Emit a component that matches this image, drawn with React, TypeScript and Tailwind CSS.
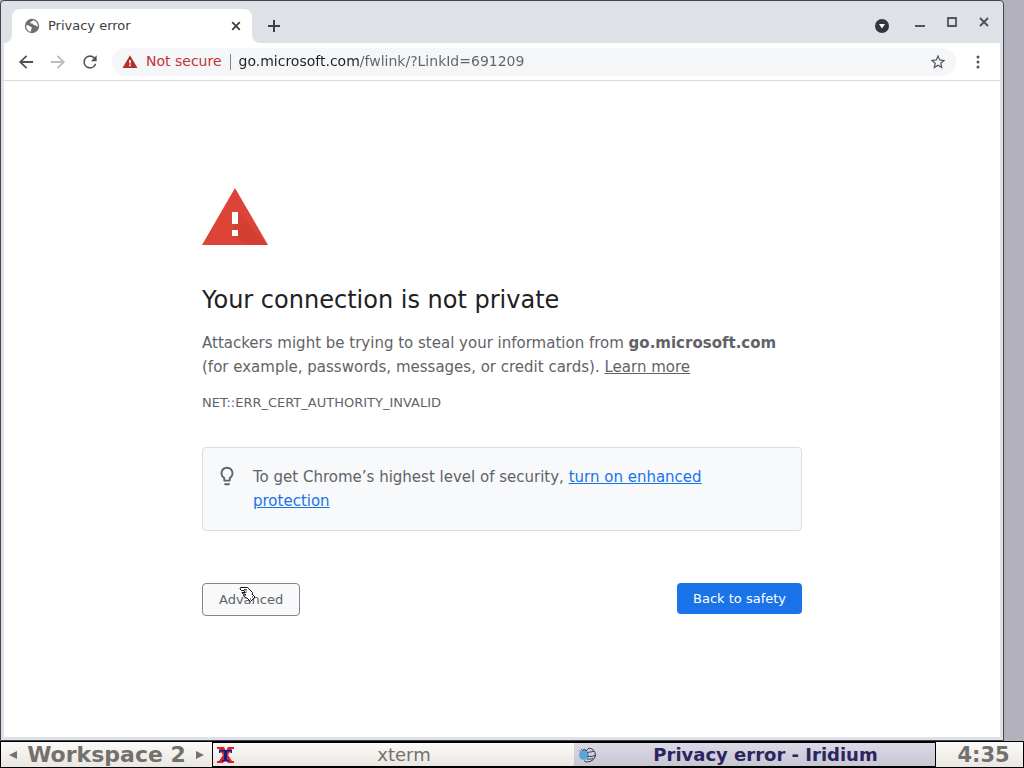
import type { ReactNode } from "react";

function GlobeIcon() {
  return (
    <svg viewBox="0 0 16 16" className="h-4 w-4 shrink-0" aria-hidden="true">
      <circle cx="8" cy="8" r="7.2" fill="#6b6f74" />
      <path
        d="M2.200 7.200c1.600-.2 3 .3 3.800 1.200.5.6 1.600.2 1.900 1 .3.900-.8 1.200-.7 2.100.1.700-.2 1.500-.6 2.200C4 13.200 1.900 10.500 2.200 7.200z"
        fill="#fff"
      />
      <path
        d="M8.800 2.300c-.2.900-.9 1.200-1.700 1.300-.6.200-.3 1-.9 1.300.2.900 1.300.7 2 .7.9 0 .8 1 1.500 1.300.9.400 2 .1 2.600 1 .3.500 1 .8 1.500.500C14 5.300 11.800 2.600 8.800 2.300z"
        fill="#fff"
      />
    </svg>
  );
}

function LeftArrow() {
  return (
    <svg viewBox="0 0 24 24" className="h-5 w-5" fill="currentColor" aria-hidden="true">
      <path d="M20.500 10.800H7.830l5.590-5.390L12 4l-8.500 8 8.500 8 1.410-1.410L7.830 13.200H20.500v-2.400z" />
    </svg>
  );
}

function ReloadIcon() {
  return (
    <svg viewBox="0 0 24 24" className="h-5 w-5" fill="currentColor" aria-hidden="true">
      <path d="M17.650 6.350A7.958 7.958 0 0 0 12 4a8 8 0 1 0 7.730 10h-2.080A6 6 0 1 1 12 6c1.660 0 3.140.69 4.220 1.780L13 11h7V4l-2.350 2.350z" />
    </svg>
  );
}

function StarIcon() {
  return (
    <svg viewBox="0 0 24 24" className="h-[18px] w-[18px]" fill="currentColor" aria-hidden="true">
      <path d="M22 9.240l-7.190-.62L12 2 9.190 8.630 2 9.240l5.460 4.730L5.820 21 12 17.270 18.180 21l-1.630-7.030L22 9.240zM12 15.400l-3.760 2.270 1-4.280-3.320-2.880 4.380-.38L12 6.100l1.710 4.040 4.380.38-3.320 2.880 1 4.280L12 15.400z" />
    </svg>
  );
}

function BulbIcon() {
  return (
    <svg viewBox="0 0 24 24" className="mx-px h-[22px] w-[22px] shrink-0" fill="#5f6368" aria-hidden="true">
      <path d="M9 21c0 .5.400 1 1 1h4c.6 0 1-.5 1-1v-1H9v1zm3-19C8.100 2 5 5.100 5 9c0 2.400 1.200 4.500 3 5.700V17c0 .5.400 1 1 1h6c.6 0 1-.5 1-1v-2.300c1.800-1.300 3-3.400 3-5.700 0-3.900-3.100-7-7-7zm2.900 11.100l-.9.600V16h-4v-2.300l-.9-.6C7.800 12.200 7 10.600 7 9c0-2.800 2.200-5 5-5s5 2.200 5 5c0 1.600-.8 3.200-2.100 4.100z" />
    </svg>
  );
}

function HandCursor() {
  return (
    <svg
      viewBox="0 0 17 17"
      className="pointer-events-none absolute top-[2px] left-[36px] h-[17px] w-[17px]"
      fill="#fff"
      stroke="#111"
      aria-hidden="true"
    >
      <path d="M1.500 1.500h7l5 5-.5 3-3.500 3.500-4-2-1-2H7L5.500 8H4l-1-1.500h3L5 4.500H2.500L1 3z" />
      <path d="M5 3.500l3 .5M5.500 6.500l2-.5M13 8l3 3-4.500 4.500-3-3" />
      <path d="M11 13h1M13 11h1" />
    </svg>
  );
}

function XtermIcon() {
  return (
    <svg viewBox="0 0 17 18" className="h-[18px] w-[17px] shrink-0" aria-hidden="true">
      <path d="M0 1h7l2 4 2-4h6v2h-2l-4 6 4 6h2v2h-6l-2.500-4-2.500 4H0v-2h2l4-6-4-6H0z" fill="#d8222b" />
      <path d="M2 4h13v3h-1.500V5.500H10V14h2v1.500H5V14h2V5.500H3.500V7H2z" fill="#171c8c" />
    </svg>
  );
}

function IridiumIcon() {
  return (
    <svg viewBox="0 0 18 16" className="h-4 w-[18px] shrink-0" aria-hidden="true">
      <circle cx="9.500" cy="8" r="6.500" fill="#cfd3e4" />
      <ellipse cx="6" cy="8" rx="5" ry="5" fill="#5ba6d6" />
      <g fill="none" stroke="#343d55" strokeWidth="1">
        <path d="M1 3.500l1 1M3 2l1.500 1.500L6.500 2l1.500 2 3-3 4 1.500 2 3 .5 3.500-2 3.500L12 14.500 8 15l-2-1.500" />
        <path d="M9 6c2-1.500 4-.5 7-2M9 9c3 1 5 .5 8-.5M9 12c2 .5 4 0 6-.5" />
      </g>
    </svg>
  );
}

type IconButtonProps = {
  label: string;
  className?: string;
  children: ReactNode;
};

function IconButton({ label, className = "", children }: IconButtonProps) {
  return (
    <button
      type="button"
      aria-label={label}
      className={`flex shrink-0 items-center justify-center ${className}`}
    >
      {children}
    </button>
  );
}

function TabStrip() {
  return (
    <header className="flex h-[41px] items-end bg-[#dee1e6] pr-2">
      <svg viewBox="0 0 8 8" className="h-2 w-2 shrink-0" fill="#fff" aria-hidden="true">
        <path d="M0 8a8 8 0 0 0 8-8v8z" />
      </svg>
      <div className="flex h-[34px] w-60 items-center rounded-t-lg bg-white pr-2 pl-3">
        <GlobeIcon />
        <span className="ml-2 flex-1 text-[13px] text-[#3c4043]">Privacy error</span>
        <IconButton label="Close tab" className="h-4 w-4">
          <svg viewBox="0 0 16 16" className="h-4 w-4" stroke="#3c4043" strokeWidth="1.800" aria-hidden="true">
            <path d="M4.200 4.200l7.600 7.600M11.800 4.200l-7.600 7.600" />
          </svg>
        </IconButton>
      </div>
      <svg viewBox="0 0 8 8" className="h-2 w-2 shrink-0" fill="#fff" aria-hidden="true">
        <path d="M8 8a8 8 0 0 1-8-8v8z" />
      </svg>
      <div className="flex h-[34px] flex-1 items-center">
        <IconButton label="New tab" className="h-7 w-7">
          <svg viewBox="0 0 14 14" className="h-[14px] w-[14px]" stroke="#3c4043" strokeWidth="2" aria-hidden="true">
            <path d="M7 1v12M1 7h12" />
          </svg>
        </IconButton>
      </div>
      <div className="flex h-[34px] items-center">
        <IconButton label="Search tabs" className="h-4 w-4">
          <svg viewBox="0 0 16 16" className="h-4 w-4" aria-hidden="true">
            <circle cx="8" cy="8" r="7" fill="#33373b" />
            <path d="M5 6h6l-3 4.500z" fill="#fff" />
          </svg>
        </IconButton>
      </div>
      <div className="mb-1 ml-[22px] flex h-[34px] items-center gap-4">
        <IconButton label="Minimize" className="h-4 w-4">
          <svg viewBox="0 0 16 16" className="h-4 w-4" fill="#50545a" aria-hidden="true">
            <path d="M3 11h10v2H3z" />
          </svg>
        </IconButton>
        <IconButton label="Maximize" className="h-4 w-4">
          <svg viewBox="0 0 16 16" className="h-4 w-4" fill="none" stroke="#50545a" strokeWidth="1.800" aria-hidden="true">
            <path d="M4 4h8v8H4z" />
          </svg>
        </IconButton>
        <IconButton label="Close" className="h-4 w-4">
          <svg viewBox="0 0 16 16" className="h-4 w-4" stroke="#50545a" strokeWidth="2" aria-hidden="true">
            <path d="M4 4l8 8M12 4l-8 8" />
          </svg>
        </IconButton>
      </div>
    </header>
  );
}

function Toolbar() {
  return (
    <nav className="flex h-[38px] items-center border-b border-[#d9dbde] bg-white pr-3 pl-3 text-[#50545a]">
      <IconButton label="Back" className="mr-3 h-5 w-5">
        <LeftArrow />
      </IconButton>
      <IconButton label="Forward" className="mr-3 h-5 w-5 -scale-x-100 text-[#babcbe]">
        <LeftArrow />
      </IconButton>
      <IconButton label="Reload" className="mr-3 h-5 w-5">
        <ReloadIcon />
      </IconButton>
      <div className="flex h-7 min-w-0 flex-1 items-center rounded-full bg-[#f5f6f7] pr-[9px] pl-[10px]">
        <svg viewBox="0 0 16 16" className="h-4 w-4 shrink-0" aria-hidden="true">
          <path d="M8 1.200L15.500 14H.5z" fill="#b3312c" />
          <path d="M7.200 6h1.600v3.500H7.200zM7.200 10.600h1.600v1.600H7.200z" fill="#fff" />
        </svg>
        <button type="button" className="ml-2 text-[14px] whitespace-nowrap text-[#c0333a]">
          Not secure
        </button>
        <span className="mx-2 h-4 w-px shrink-0 bg-[#80868b]" />
        <input
          type="text"
          aria-label="Address"
          defaultValue="go.microsoft.com/fwlink/?LinkId=691209"
          spellCheck={false}
          className="min-w-0 flex-1 bg-[linear-gradient(90deg,#202124_121px,#5f6368_121px)] bg-clip-text text-[14px] text-transparent caret-black outline-none"
        />
        <IconButton label="Bookmark this tab" className="h-[18px] w-[18px]">
          <StarIcon />
        </IconButton>
      </div>
      <IconButton label="Menu" className="ml-3 h-5 w-5">
        <svg viewBox="0 0 20 20" className="h-5 w-5" fill="currentColor" aria-hidden="true">
          <circle cx="10" cy="5" r="1.500" />
          <circle cx="10" cy="10" r="1.500" />
          <circle cx="10" cy="15" r="1.500" />
        </svg>
      </IconButton>
    </nav>
  );
}

function PrivacyError() {
  return (
    <main className="flex-1 bg-white px-6 pt-[100px] text-[15px] leading-6 text-[#5f6368]">
      <div className="mx-auto max-w-[600px]">
        <svg viewBox="0 0 72 72" className="h-[72px] w-[72px]" aria-hidden="true">
          <path d="M33 7l33 57H0z" fill="#db4437" />
          <path d="M36 31l30 33H46L30 55z" fill="#c93a2e" opacity=".4" />
          <path d="M30 31h6v12h-6zM30 49h6v6h-6z" fill="#fff" />
        </svg>
        <h1 className="mt-[33px] text-[24px] leading-7 text-[#202124]">
          Your connection is not private
        </h1>
        <p className="mt-[17px]">
          Attackers might be trying to steal your information from{" "}
          <strong>go.microsoft.com</strong> (for example, passwords, messages, or credit cards).{" "}
          <a href="#learn-more" className="underline">
            Learn more
          </a>
        </p>
        <p className="mt-3 text-[13px] leading-6">NET::ERR_CERT_AUTHORITY_INVALID</p>
        <div className="mt-8 flex rounded border border-[#dadce0] bg-[#f8f9fa] py-[17px] pr-6 pl-3">
          <BulbIcon />
          <p className="ml-[14px] flex-1">
            To get Chrome’s highest level of security,{" "}
            <a href="#enhanced-protection" className="text-[#1a73e8] underline">
              turn on enhanced protection
            </a>
          </p>
        </div>
        <div className="mt-[52px] flex items-start justify-between text-[13px] leading-[15px]">
          <button
            type="button"
            className="relative rounded border border-[#80868b] bg-[#f8f9fa] px-4 py-2"
          >
            Advanced
            <HandCursor />
          </button>
          <button type="button" className="rounded bg-[#1a73e8] px-4 py-2 text-white">
            Back to safety
          </button>
        </div>
      </div>
    </main>
  );
}

function Taskbar() {
  return (
    <footer className="flex h-[27px] gap-px border border-black bg-black text-[18px] leading-6 text-[#72716d]">
      <div className="flex w-[211px] shrink-0 items-center justify-between bg-linear-to-b from-[#fbfaf7] to-[#eae7e1] px-2">
        <button type="button" aria-label="Previous workspace">
          <svg viewBox="0 0 8 8" className="h-2 w-2" fill="currentColor" aria-hidden="true">
            <path d="M8 0v8L0 4z" />
          </svg>
        </button>
        <span className="pt-px text-[22px] font-bold">Workspace 2</span>
        <button type="button" aria-label="Next workspace">
          <svg viewBox="0 0 8 8" className="h-2 w-2" fill="currentColor" aria-hidden="true">
            <path d="M0 0l8 4-8 4z" />
          </svg>
        </button>
      </div>
      <div className="flex min-w-0 flex-1 py-px">
        <button
          type="button"
          className="flex min-w-0 flex-1 items-center bg-linear-to-b from-[#fbfaf7] to-[#eae7e1] pl-1"
        >
          <XtermIcon />
          <span className="flex-1 pt-px text-center">xterm</span>
        </button>
        <button
          type="button"
          className="flex min-w-0 flex-1 items-center bg-linear-to-b from-[#dcd9e6] to-[#c9c6d3] pl-1 font-bold text-[#2b2560]"
        >
          <IridiumIcon />
          <span className="flex-1 pt-px text-center whitespace-nowrap">
            Privacy error - Iridium
          </span>
        </button>
      </div>
      <time className="flex w-[87px] shrink-0 items-center justify-center bg-linear-to-b from-[#fbfaf7] to-[#eae7e1] pt-px pl-2 text-[21px] font-bold">
        4:35
      </time>
    </footer>
  );
}

export default function App() {
  return (
    <div className="flex min-h-screen flex-col bg-[#b1b0bb] font-['DejaVu_Sans',sans-serif]">
      <div className="mr-5 flex flex-1 flex-col rounded-t border border-[#44444c] bg-[#dee1e6] px-[3px] pt-px pb-[3px]">
        <TabStrip />
        <Toolbar />
        <PrivacyError />
      </div>
      <Taskbar />
    </div>
  );
}
